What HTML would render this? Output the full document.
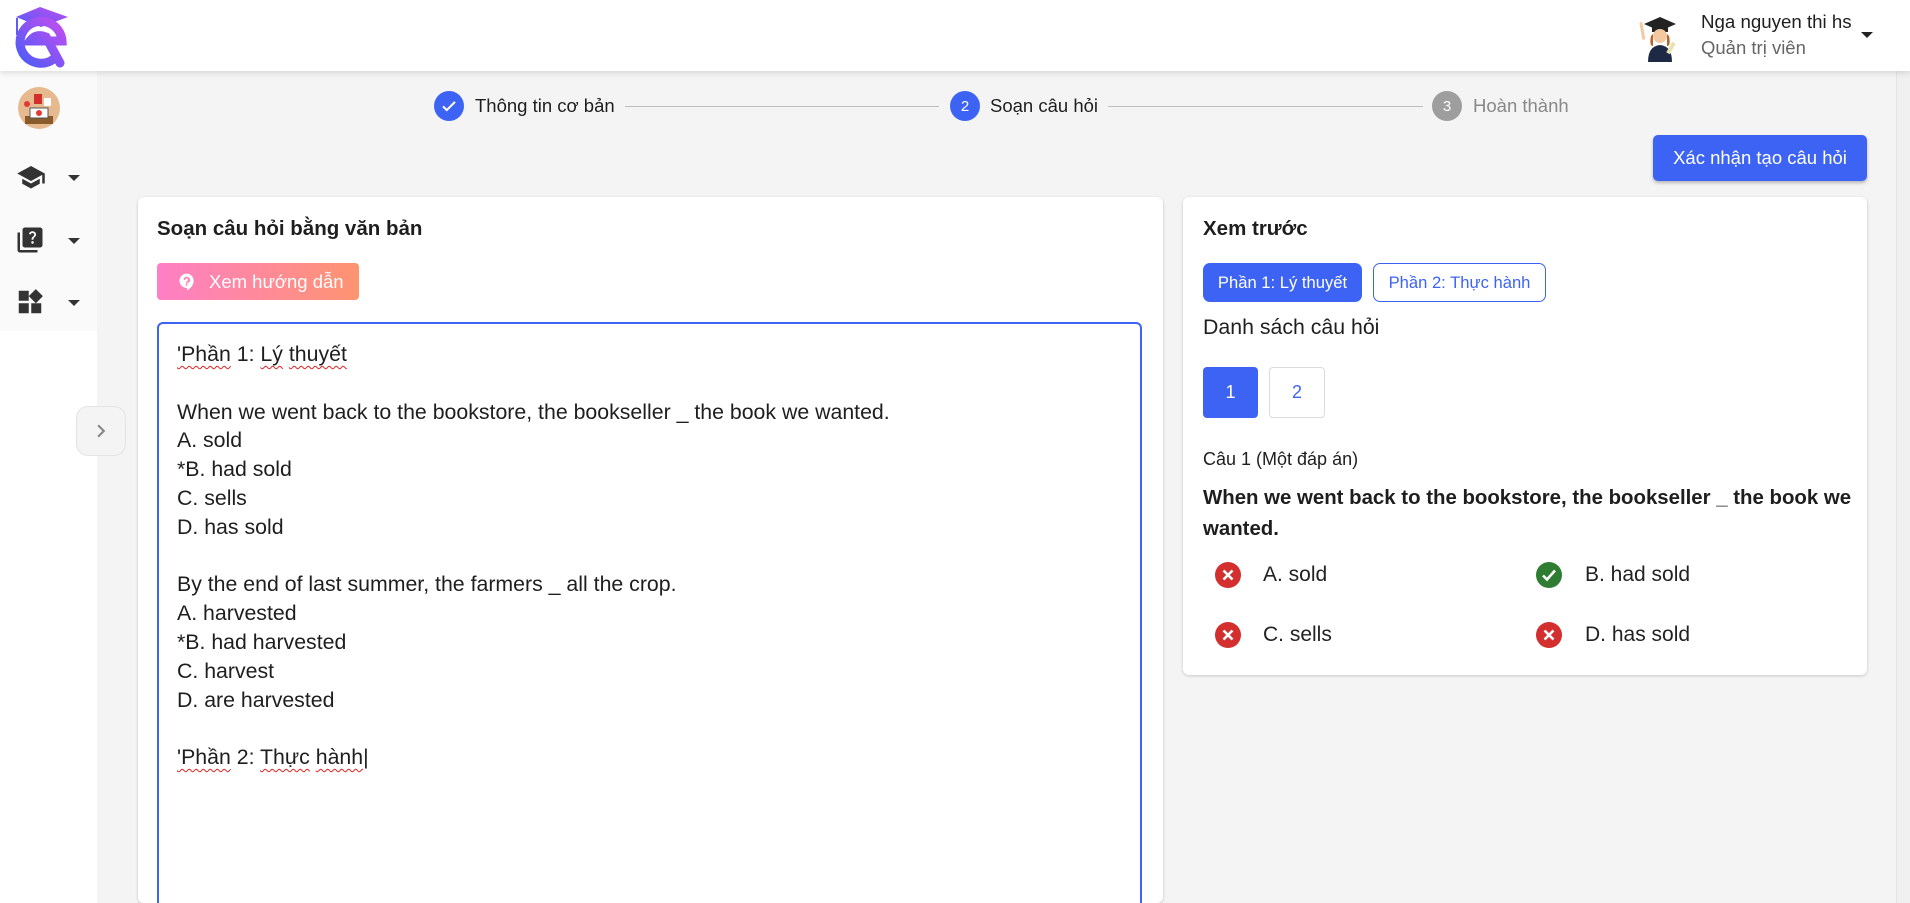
<!DOCTYPE html>
<html><head><meta charset="utf-8">
<style>
*{box-sizing:border-box;margin:0;padding:0}
html,body{width:1910px;height:903px;overflow:hidden}
body{background:#f4f4f4;font-family:"Liberation Sans",Arial,sans-serif;color:#1e1e1e;position:relative}
.abs{position:absolute}
.header{left:0;top:0;width:1910px;height:71px;background:#fff;box-shadow:0 2px 6px rgba(0,0,0,.12);z-index:2}
.sidebar{left:0;top:71px;width:97px;height:260px;background:#fafafa}
.sidewhite{left:0;top:331px;width:97px;height:572px;background:#fff}
.scroll{left:1896px;top:71px;width:14px;height:832px;background:#f0f0f0;border-left:1px solid #e4e4e4}
.caret{width:0;height:0;border-left:6px solid transparent;border-right:6px solid transparent;border-top:6px solid #333}
.card{background:#fff;border-radius:6px;box-shadow:0 1px 3px rgba(0,0,0,.18)}
.step{font-size:18.5px;color:#1e1e1e}
.circ{width:30px;height:30px;border-radius:50%;background:#3d63f5;color:#fff;font-size:15px;display:flex;align-items:center;justify-content:center}
.line{height:1px;background:#bdbdbd}
.ta{font-size:21.3px;line-height:28.8px;color:#1e1e1e;white-space:pre}
.sq{text-decoration:underline wavy #e02020;text-decoration-thickness:1px;text-underline-offset:4px}
.ans{font-size:21px;color:#222}
</style></head><body>
<div class="abs header">
  <svg class="abs" style="left:10px;top:5px" width="62" height="64" viewBox="0 0 62 64">
    <defs><linearGradient id="g" x1="0" y1="1" x2="1" y2="0"><stop offset="0" stop-color="#4b5cf7"/><stop offset="1" stop-color="#c34df0"/></linearGradient></defs>
    <polygon points="6,12 30,2 58,12 31,22" fill="url(#g)"/>
    <line x1="7" y1="13" x2="7" y2="30" stroke="#5a5cf5" stroke-width="2"/>
    <path d="M46 52 A21 21 0 1 1 52 36 L20 36 Q26 28 36 32 L50 58" fill="none" stroke="url(#g)" stroke-width="9" stroke-linecap="round"/>
  </svg>
  <svg class="abs" style="left:1636px;top:12px" width="44" height="50" viewBox="0 0 44 50">
    <polygon points="8,12 24,5 40,12 24,19" fill="#222"/><rect x="16" y="14" width="16" height="6" fill="#222"/>
    <circle cx="24" cy="24" r="7" fill="#f2c9a0"/><path d="M15 24 Q13 34 17 34 L17 22Z" fill="#b5652b"/><path d="M33 24 Q35 34 31 34 L31 22Z" fill="#b5652b"/>
    <path d="M12 50 Q12 34 24 33 Q36 34 36 50Z" fill="#1e2a45"/><rect x="5" y="10" width="3" height="18" rx="1.5" fill="#f2c9a0" transform="rotate(-10 6 20)"/>
    <rect x="33" y="30" width="4" height="12" fill="#e8e4b0" transform="rotate(30 35 36)"/>
  </svg>
  <div class="abs" style="left:1701px;top:11px;font-size:18.7px;color:#1e1e1e">Nga nguyen thi hs</div>
  <div class="abs" style="left:1701px;top:37px;font-size:18.5px;color:#666">Quản trị viên</div>
  <div class="abs caret" style="left:1861px;top:32px;border-top-color:#222"></div>
</div>
<div class="abs sidebar"></div>
<div class="abs sidewhite"></div>
<svg class="abs" style="left:17px;top:86px" width="44" height="44" viewBox="0 0 44 44">
  <circle cx="22" cy="22" r="21" fill="#e6b98f"/><rect x="8" y="30" width="28" height="8" fill="#8b5a2b"/>
  <rect x="17" y="8" width="8" height="10" fill="#d32f2f"/><rect x="27" y="12" width="7" height="8" fill="#fff"/>
  <rect x="13" y="22" width="18" height="10" fill="#fff" stroke="#555"/><circle cx="22" cy="27" r="3" fill="#e53935"/>
  <circle cx="10" cy="18" r="3" fill="#e53935"/>
</svg>
<svg class="abs" style="left:16px;top:162px" width="30" height="28" viewBox="0 0 24 22"><path fill="#333" d="M5 13.18v4L12 21l7-3.82v-4L12 17l-7-3.82zM12 3 1 9l11 6 9-4.91V17h2V9L12 3z"/></svg>
<div class="abs caret" style="left:68px;top:175px"></div>
<svg class="abs" style="left:15px;top:225px" width="30" height="30" viewBox="0 0 24 24"><path fill="#333" d="M4 6H2v14c0 1.1.9 2 2 2h14v-2H4V6zm16-4H8c-1.1 0-2 .9-2 2v12c0 1.1.9 2 2 2h12c1.1 0 2-.9 2-2V4c0-1.1-.9-2-2-2zm-5.99 13c-.59 0-1.050-.47-1.05-1.05 0-.59.47-1.04 1.05-1.04.59 0 1.04.45 1.04 1.040-.01.58-.45 1.050-1.04 1.050zm2.5-6.17c-.63.93-1.23 1.21-1.56 1.81-.13.24-.18.4-.18 1.18h-1.52c0-.41-.06-1.08.26-1.65.41-.73 1.18-1.16 1.63-1.8.48-.68.21-1.94-1.14-1.94-.88 0-1.32.67-1.5 1.23l-1.37-.57C11.51 5.96 12.52 5 13.99 5c1.23 0 2.08.56 2.51 1.26.37.61.58 1.73.01 2.57z"/></svg>
<div class="abs caret" style="left:68px;top:238px"></div>
<svg class="abs" style="left:15px;top:287px" width="30" height="30" viewBox="0 0 24 24"><path fill="#333" d="M13 13v8h8v-8h-8zM3 21h8v-8H3v8zM3 3v8h8V3H3zm13.66-1.31L11 7.34 16.66 13l5.66-5.66-5.66-5.65z"/></svg>
<div class="abs caret" style="left:68px;top:300px"></div>
<div class="abs" style="left:76px;top:406px;width:50px;height:50px;border-radius:12px;background:#f4f4f4;border:1px solid #e4e4e4"></div>
<svg class="abs" style="left:88px;top:418px" width="26" height="26" viewBox="0 0 24 24"><path fill="#888" d="M8.6 16.6 13.2 12 8.6 7.4 10 6l6 6-6 6z"/></svg>
<div class="abs scroll"></div>

<div class="abs circ" style="left:434px;top:91px"><svg width="18" height="18" viewBox="0 0 24 24"><path fill="none" stroke="#fff" stroke-width="2.6" d="M4 12.5l5 5L20 6.5"/></svg></div>
<div class="abs step" style="left:475px;top:95px">Thông tin cơ bản</div>
<div class="abs line" style="left:625px;top:106px;width:314px"></div>
<div class="abs circ" style="left:950px;top:91px">2</div>
<div class="abs step" style="left:990px;top:95px">Soạn câu hỏi</div>
<div class="abs line" style="left:1108px;top:106px;width:315px"></div>
<div class="abs circ" style="left:1432px;top:91px;background:#9e9e9e">3</div>
<div class="abs step" style="left:1473px;top:95px;color:#888">Hoàn thành</div>

<div class="abs" style="left:1653px;top:135px;width:214px;height:46px;background:#3d63f5;border-radius:5px;color:#fff;font-size:18.5px;display:flex;align-items:center;justify-content:center;box-shadow:0 2px 3px rgba(0,0,0,.25)">Xác nhận tạo câu hỏi</div>

<div class="abs card" style="left:138px;top:197px;width:1025px;height:706px"></div>
<div class="abs" style="left:157px;top:217px;font-size:20.5px;font-weight:bold">Soạn câu hỏi bằng văn bản</div>
<div class="abs" style="left:157px;top:263px;width:202px;height:37px;border-radius:4px;background:linear-gradient(90deg,#fe7fc6,#fd9470);color:#fff;font-size:18.5px;display:flex;align-items:center;padding-left:20px">
  <svg width="20" height="20" viewBox="0 0 24 24" style="margin-right:12px"><path fill="#fff" d="M11.5 2C6.81 2 3 5.81 3 10.5S6.81 19 11.5 19h.5v3c4.86-2.34 8-7 8-11.5C20 5.81 16.19 2 11.5 2zm1 14.5h-2v-2h2v2zm.4-4.78c-.84 1.1-.2 1.5-.4 2.28H10.5c0-2 1.3-2.5 2.3-3.6.8-.9.5-2.3-.7-2.6-1-.2-1.9.4-2.2 1.3-.14.36-.47.65-.88.65h-.2c-.6 0-1.04-.59-.87-1.17.55-1.82 2.37-3.09 4.43-2.79 1.69.25 3.04 1.64 3.33 3.33.44 2.44-1.63 3.03-2.53 4.39z"/></svg>Xem hướng dẫn</div>
<div class="abs" style="left:157px;top:322px;width:985px;height:600px;border:2px solid #3d63f5;border-radius:6px"></div>
<div class="abs ta" style="left:177px;top:340px"><span class="sq">'Phần</span> 1: <span class="sq">Lý</span> <span class="sq">thuyết</span>

When we went back to the bookstore, the bookseller _ the book we wanted.
A. sold
*B. had sold
C. sells
D. has sold

By the end of last summer, the farmers _ all the crop.
A. harvested
*B. had harvested
C. harvest
D. are harvested

<span class="sq">'Phần</span> 2: <span class="sq">Thực</span> <span class="sq">hành</span>|</div>

<div class="abs card" style="left:1183px;top:197px;width:684px;height:478px"></div>
<div class="abs" style="left:1203px;top:217px;font-size:20.5px;font-weight:bold">Xem trước</div>
<div class="abs" style="left:1203px;top:263px;width:159px;height:39px;border-radius:7px;background:#3d63f5;color:#fff;font-size:16.6px;display:flex;align-items:center;justify-content:center">Phần 1: Lý thuyết</div>
<div class="abs" style="left:1373px;top:263px;width:173px;height:39px;border-radius:7px;border:1px solid #3d63f5;color:#3d63f5;font-size:16.6px;display:flex;align-items:center;justify-content:center">Phần 2: Thực hành</div>
<div class="abs" style="left:1203px;top:315px;font-size:21.3px">Danh sách câu hỏi</div>
<div class="abs" style="left:1203px;top:367px;width:55px;height:51px;border-radius:4px;background:#3d63f5;color:#fff;font-size:18px;display:flex;align-items:center;justify-content:center">1</div>
<div class="abs" style="left:1269px;top:367px;width:56px;height:51px;border-radius:4px;border:1px solid #dcdcdc;color:#3d63f5;font-size:18px;display:flex;align-items:center;justify-content:center">2</div>
<div class="abs" style="left:1203px;top:449px;font-size:18px">Câu 1 (Một đáp án)</div>
<div class="abs" style="left:1203px;top:483px;width:660px;font-size:20.4px;font-weight:bold;line-height:31px">When we went back to the bookstore, the bookseller _ the book we wanted.</div>
<svg width="0" height="0" style="position:absolute"><defs>
<g id="x"><circle cx="13" cy="13" r="13" fill="#d32f2f"/><path d="M8.5 8.5l9 9M17.5 8.5l-9 9" stroke="#fff" stroke-width="2.6"/></g>
<g id="c"><circle cx="13" cy="13" r="13" fill="#2e7d32"/><path d="M7 13.5l4 4 8-9" stroke="#fff" stroke-width="2.6" fill="none"/></g></defs></svg>
<svg class="abs" style="left:1215px;top:562px" width="26" height="26"><use href="#x"/></svg>
<div class="abs ans" style="left:1263px;top:563px">A. sold</div>
<svg class="abs" style="left:1536px;top:562px" width="26" height="26"><use href="#c"/></svg>
<div class="abs ans" style="left:1585px;top:563px">B. had sold</div>
<svg class="abs" style="left:1215px;top:622px" width="26" height="26"><use href="#x"/></svg>
<div class="abs ans" style="left:1263px;top:623px">C. sells</div>
<svg class="abs" style="left:1536px;top:622px" width="26" height="26"><use href="#x"/></svg>
<div class="abs ans" style="left:1585px;top:623px">D. has sold</div>
</body></html>
